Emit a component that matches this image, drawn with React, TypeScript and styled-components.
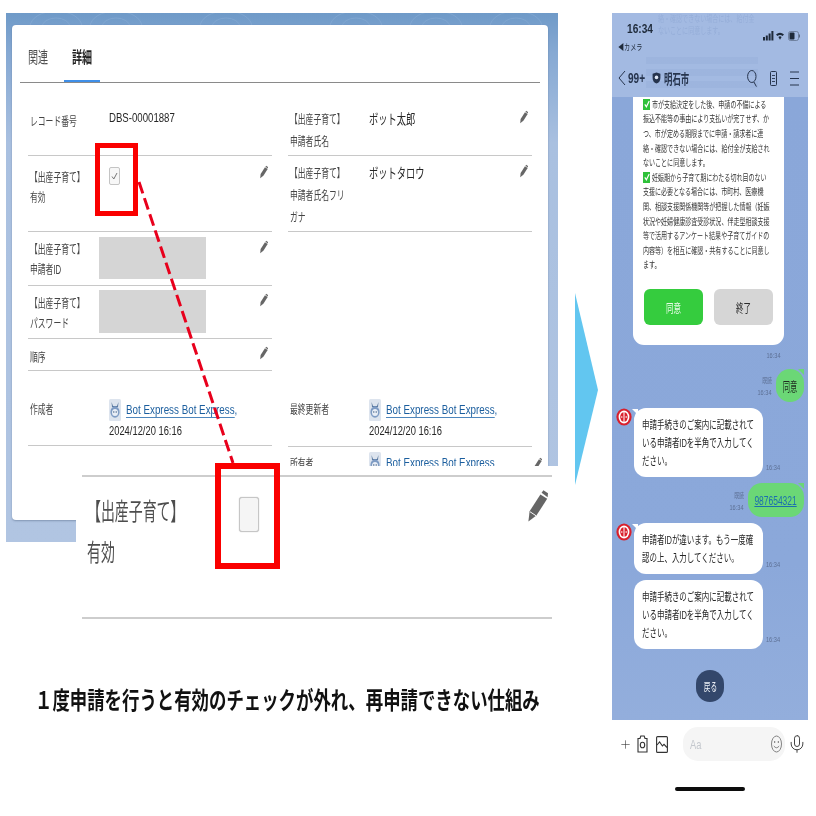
import styled, { createGlobalStyle } from "styled-components";
import { Mic, Plus } from "lucide-react";

const GlobalStyle = createGlobalStyle`
body {
    margin: 0;
    background: #fff;
    font-family: "Liberation Sans", "Noto Sans CJK JP", sans-serif;
    color: #2b2b2b;
}
`

const Page = styled.div`
position: relative;
width: 816px;
height: 816px;
display: flex;
overflow: hidden;
background: #fff;
`

const LeftCol = styled.div`
width: 552px;
margin-left: 6px;
padding-top: 13px;
flex-shrink: 0;
`

// text in the picture is squeezed horizontally, it comes from a stretched screenshot
const T = styled.span<{ $sx?: number; $origin?: string; $size?: number }>`
display: inline-block;
white-space: nowrap;
font-size: ${p => (p.$size ? `${p.$size}px` : "inherit")};
transform: scaleX(${p => p.$sx ?? 0.65});
transform-origin: ${p => p.$origin ?? "left"} center;
`

const Panel = styled.div`
position: relative;
height: 529px;
overflow: hidden;
background: linear-gradient(180deg, #6f9ac8 0, #86a9d3 40px, #a9c0e0 130px, #b1c5e2 100%);
filter: blur(0.3px);
`

const Swirls = styled.svg`
position: absolute;
left: 0;
top: 0;
opacity: 0.45;
`

const Card = styled.div`
position: relative;
margin: 12px 10px 22px 6px;
height: 495px;
background: #fff;
border-radius: 4px;
box-shadow: 0 1px 2px rgba(60, 80, 110, 0.4);
overflow: hidden;
`

const TabBar = styled.div`
display: flex;
gap: 24px;
height: 57px;
margin: 0 8px;
padding-left: 8px;
align-items: flex-end;
border-bottom: 1px solid #8a8a8a;
`

const Tab = styled.div<{ $active?: boolean }>`
position: relative;
width: 20px;
height: 34px;
font-size: 16px;
line-height: 20px;
font-weight: ${p => (p.$active ? 700 : 400)};
color: ${p => (p.$active ? "#1f1f1f" : "#4c4c4c")};
&::after {
    content: "";
    display: ${p => (p.$active ? "block" : "none")};
    position: absolute;
    left: -8px;
    width: 36px;
    bottom: 0;
    height: 2px;
    background: #3f8fe8;
}
`

const Columns = styled.div`
display: grid;
grid-template-columns: 244px 244px;
gap: 16px;
margin: 17px 0 0 16px;
`

const Column = styled.div`
display: flex;
flex-direction: column;
`

const Row = styled.div<{ $h: number; $noLine?: boolean }>`
display: grid;
grid-template-columns: 81px 1fr 16px;
height: ${p => p.$h}px;
border-bottom: ${p => (p.$noLine ? "none" : "1px solid #c8c8c8")};
box-sizing: border-box;
`

const Spacer = styled.div<{ $h: number }>`
height: ${p => p.$h}px;
`

const Label = styled.div<{ $top: number; $lh?: number }>`
padding: ${p => p.$top}px 0 0 2px;
font-size: 12px;
line-height: ${p => p.$lh ?? 20}px;
color: #444;
`

const Line = styled.div`
display: block;
`

const Value = styled.div<{ $top: number }>`
padding-top: ${p => p.$top}px;
font-size: 13px;
line-height: 20px;
color: #262626;
`

const Masked = styled.div<{ $top: number; $h: number }>`
margin: ${p => p.$top}px 0 0 -10px;
width: 107px;
height: ${p => p.$h}px;
background: #d5d5d5;
`

const SmallCheck = styled.div`
margin: 11px 0 0 0;
width: 11px;
height: 18px;
border: 1px solid #c4c4c4;
border-radius: 2px;
box-sizing: border-box;
background: #f7f7f7;
display: flex;
align-items: center;
justify-content: center;
color: #777;
`

const UserLine = styled.div<{ $top: number }>`
display: flex;
align-items: center;
gap: 5px;
height: 22px;
margin-top: ${p => p.$top}px;
`

const UserLink = styled.span`
display: inline-block;
white-space: nowrap;
transform: scaleX(0.755);
transform-origin: left center;
color: #1b5e9e;
line-height: 14px;
`

const UserName = styled.span`
border-bottom: 1px solid #4d86bd;
`

const PencilSlot = styled.div<{ $top: number }>`
padding-top: ${p => p.$top}px;
display: flex;
justify-content: center;
`

const PencilIcon = ({ large }: { large?: boolean }) => (
    <svg width={large ? 20 : 8} height={large ? 32 : 16} viewBox="0 0 10 16">
        <polygon points="0.2,15.8 0.8,10.6 6.2,2.2 9.6,4.4 4.2,12.8" fill="#666" />
        <polygon points="6.8,1.4 7.7,0.1 10,1.6 9.8,3.6" fill="#666" />
        {large && <line x1="0.9" y1="10.8" x2="4.2" y2="13" stroke="#fff" strokeWidth="0.5" />}
    </svg>
)

const BotAvatar = () => (
    <svg width="12" height="22" viewBox="0 0 12 22">
        <rect x="0" y="0" width="12" height="22" rx="1.5" fill="#dde4ee" />
        <path d="M2.5 3 L4 7 H8 L9.5 3 L9 8 H3z" fill="#59789f" />
        <ellipse cx="6" cy="13" rx="4.6" ry="5.8" fill="#7f9cc4" />
        <ellipse cx="6" cy="13.5" rx="3" ry="3.6" fill="#e9eef6" />
        <circle cx="4.8" cy="13" r="0.7" fill="#3d5a80" />
        <circle cx="7.2" cy="13" r="0.7" fill="#3d5a80" />
    </svg>
)

const CreatedBy = () => (
    <Value $top={0}>
        <UserLine $top={28}>
            <BotAvatar />
            <UserLink><UserName>Bot Express Bot Express</UserName>,</UserLink>
        </UserLine>
        <T $sx={0.72}>2024/12/20 16:16</T>
    </Value>
)

const SmallFrame = styled.div`
position: absolute;
left: 95px;
top: 143px;
width: 43px;
height: 73px;
box-sizing: border-box;
border: 5px solid #fa0000;
`

const Dashes = styled.svg`
position: absolute;
left: 130px;
top: 175px;
`

const ZoomPanel = styled.div`
position: absolute;
left: 76px;
top: 466px;
width: 499px;
height: 162px;
background: #fff;
filter: blur(0.4px);
`

const ZoomRow = styled.div`
margin: 9px 23px 0 6px;
height: 144px;
box-sizing: border-box;
border-top: 2px solid #cdcdcd;
border-bottom: 2px solid #cdcdcd;
display: grid;
grid-template-columns: 157px 1fr 24px;
`

const ZoomLabel = styled.div`
padding: 14px 0 0 5px;
font-size: 24px;
line-height: 41px;
color: #4d4d4d;
`

const BigCheck = styled.div`
margin-top: 20px;
width: 20px;
height: 35px;
box-sizing: border-box;
border: 1px solid #c6c6c6;
border-radius: 3px;
background: #f5f5f5;
box-shadow: 0 0 1px #aaa;
`

const ZoomPencil = styled.div`
padding-top: 13px;
`

const BigFrame = styled.div`
position: absolute;
left: 215px;
top: 463px;
width: 65px;
height: 106px;
box-sizing: border-box;
border: 6px solid #fa0000;
`

const Caption = styled.div`
margin-top: 144px;
padding-left: 29px;
height: 30px;
font-size: 24px;
line-height: 30px;
font-weight: 700;
color: #111;
`

const ArrowCol = styled.svg`
margin: 293px 0 0 17px;
flex-shrink: 0;
`

const Phone = styled.div`
margin: 13px 0 0 14px;
width: 196px;
flex-shrink: 0;
display: flex;
flex-direction: column;
filter: blur(0.25px);
`

const PhoneHeader = styled.div`
position: relative;
height: 84px;
background: #a3bae2;
overflow: hidden;
`

const GhostText = styled.div`
position: absolute;
left: 46px;
top: 0;
font-size: 9px;
line-height: 12px;
color: #4f6ea8;
opacity: 0.16;
`

const GhostBars = styled.div`
position: absolute;
left: 34px;
top: 44px;
width: 112px;
height: 32px;
opacity: 0.07;
background: repeating-linear-gradient(180deg, #4f6ea8 0, #4f6ea8 7px, transparent 7px, transparent 12px);
`

const Clock = styled.div`
position: absolute;
left: 15px;
top: 9px;
font-size: 13px;
line-height: 14px;
font-weight: 700;
color: #1e2a3a;
`

const BackApp = styled.div`
position: absolute;
left: 6px;
top: 29px;
font-size: 8.5px;
line-height: 10px;
color: #1e2a3a;
`

const StatusIcons = styled.svg`
position: absolute;
left: 150px;
top: 17px;
`

const NavBar = styled.div`
position: absolute;
left: 6px;
right: 9px;
top: 54px;
height: 22px;
display: flex;
align-items: center;
color: #26344d;
`

const NavTitle = styled.div<{ $w?: number; $left: number }>`
font-size: 14px;
font-weight: 700;
display: flex;
align-items: center;
margin-left: ${p => p.$left}px;
width: ${p => (p.$w ? `${p.$w}px` : "auto")};
`

const NavIcons = styled.div`
margin-left: auto;
display: flex;
align-items: center;
gap: 13px;
`

const Chat = styled.div`
height: 623px;
overflow: hidden;
background: linear-gradient(180deg, #8aa7d9 0, #8ba8da 75%, #93aedc 100%);
`

const FlexCard = styled.div`
margin-left: 21px;
width: 151px;
height: 248px;
box-sizing: border-box;
background: #fff;
border-radius: 0 0 11px 11px;
padding-left: 10px;
`

const CardLine = styled.div`
display: flex;
align-items: center;
height: 14.6px;
font-size: 9px;
color: #333;
`

const GreenTick = styled.span`
display: inline-flex;
align-items: center;
justify-content: center;
width: 7px;
height: 11px;
margin-right: 1.5px;
background: #2fc13a;
color: #fff;
flex-shrink: 0;
`

const Buttons = styled.div`
display: flex;
gap: 11px;
margin-top: 17px;
margin-left: 1px;
`

const FlexButton = styled.div<{ $green?: boolean }>`
width: 59px;
height: 36px;
border-radius: 6px;
display: flex;
align-items: center;
justify-content: center;
font-size: 12.5px;
background: ${p => (p.$green ? "#35cc3e" : "#d6d6d6")};
color: ${p => (p.$green ? "#e9fbe9" : "#2b2b2b")};
`

const TimeRow = styled.div`
display: flex;
justify-content: flex-end;
height: 8px;
margin-top: 7px;
padding-right: 27px;
`

const Stamp = styled.div`
font-size: 7px;
line-height: 8px;
color: #5d7095;
text-align: right;
`

const SentRow = styled.div<{ $top: number }>`
display: flex;
justify-content: flex-end;
align-items: flex-end;
gap: 4px;
margin-top: ${p => p.$top}px;
padding-right: 4px;
`

const SentMeta = styled.div`
display: flex;
flex-direction: column;
gap: 4px;
padding-bottom: 5px;
`

const SentBubble = styled.div<{ $w: number; $h: number }>`
position: relative;
width: ${p => p.$w}px;
height: ${p => p.$h}px;
border-radius: 14px;
background: #6bd776;
display: flex;
align-items: center;
justify-content: center;
font-size: 13px;
color: #1f2d20;
&::after {
    content: "";
    position: absolute;
    right: 0;
    top: 0;
    width: 0;
    height: 0;
    border-top: 6px solid #6bd776;
    border-left: 6px solid transparent;
}
`

const PhoneLink = styled.span`
display: inline-block;
white-space: nowrap;
font-size: 13px;
color: #1c6fae;
text-decoration: underline;
transform: scaleX(0.65);
`

const RecvRow = styled.div<{ $top: number }>`
display: flex;
align-items: flex-end;
gap: 3px;
margin-top: ${p => p.$top}px;
padding-left: 22px;
position: relative;
`

const OrgAvatar = styled.svg`
position: absolute;
left: 4px;
top: 0;
`

const Bubble = styled.div<{ $lh: number; $tail?: boolean }>`
position: relative;
width: 129px;
box-sizing: border-box;
padding: 8px 0 7px 8px;
border-radius: 12px;
background: #fff;
font-size: 11.5px;
line-height: ${p => p.$lh}px;
color: #262626;
&::before {
    content: "";
    display: ${p => (p.$tail ? "block" : "none")};
    position: absolute;
    left: -2px;
    top: 1px;
    width: 0;
    height: 0;
    border-top: 6px solid #fff;
    border-left: 6px solid transparent;
}
`

const RecvStamp = styled(Stamp)`
padding-bottom: 5px;
`

const BackRow = styled.div`
display: flex;
justify-content: center;
margin-top: 21px;
`

const BackButton = styled.div`
width: 28px;
height: 32px;
border-radius: 14px;
background: #33476b;
color: #eef2f8;
font-size: 11.5px;
display: flex;
align-items: center;
justify-content: center;
`

const InputBar = styled.div`
height: 50px;
padding: 7px 0 0 7px;
box-sizing: border-box;
display: flex;
align-items: flex-start;
background: #fff;
color: #333;
`

const BarIcon = styled.div<{ $w: number }>`
width: ${p => p.$w}px;
height: 34px;
display: flex;
align-items: center;
justify-content: center;
flex-shrink: 0;
`

const InputBox = styled.div`
width: 102px;
height: 34px;
box-sizing: border-box;
padding: 0 3px 0 7px;
border-radius: 15px;
background: #f5f5f5;
display: flex;
align-items: center;
justify-content: space-between;
font-size: 13px;
color: #c4c8ce;
flex-shrink: 0;
`

const HomeBar = styled.div`
margin: 17px 0 0 63px;
width: 70px;
height: 4px;
border-radius: 2px;
background: #0c0c0c;
`

const CardText = [
    [true, "市が支給決定をした後、申請の不備による"],
    [false, "振込不能等の事由により支払いが完了せず、か"],
    [false, "つ、市が定める期限までに申請・請求者に連"],
    [false, "絡・確認できない場合には、給付金が支給され"],
    [false, "ないことに同意します。"],
    [true, "妊娠期から子育て期にわたる切れ目のない"],
    [false, "支援に必要となる場合には、市町村、医療機"],
    [false, "関、相談支援関係機関等が把握した情報（妊娠"],
    [false, "状況や妊婦健康診査受診状況、伴走型相談支援"],
    [false, "等で活用するアンケート結果や子育てガイドの"],
    [false, "内容等）を相互に確認・共有することに同意し"],
    [false, "ます。"],
] as const

const Avatar = () => (
    <OrgAvatar width="16" height="18" viewBox="0 0 16 18">
        <ellipse cx="8" cy="9" rx="7.6" ry="8.6" fill="#d9202c" />
        <ellipse cx="8" cy="9" rx="5.4" ry="6.4" fill="#fff" />
        <ellipse cx="8" cy="9" rx="3.8" ry="4.8" fill="#d9202c" />
        <line x1="8" y1="3.5" x2="8" y2="14.5" stroke="#fff" strokeWidth="1" />
        <circle cx="5.8" cy="9" r="0.8" fill="#fff" />
        <circle cx="10.2" cy="9" r="0.8" fill="#fff" />
    </OrgAvatar>
)

const Tick = () => (
    <GreenTick>
        <svg width="6" height="8" viewBox="0 0 6 8">
            <path d="M0.8 4.4 L2.4 6.8 L5.2 1" fill="none" stroke="#fff" strokeWidth="1.2" />
        </svg>
    </GreenTick>
)

const BracketLabel = "【出産子育て】"

const App = () => {
    return (
        <Page>
            <GlobalStyle />
            <LeftCol>
                <Panel>
                    <Swirls width="552" height="60" viewBox="0 0 552 60">
                        {[50, 110, 220, 350, 430, 510].map(x => (
                            <g key={x} fill="none" stroke="#8fb1d8" strokeWidth="1">
                                <ellipse cx={x} cy="14" rx="26" ry="16" />
                                <ellipse cx={x} cy="14" rx="14" ry="9" />
                            </g>
                        ))}
                    </Swirls>
                    <Card>
                        <TabBar>
                            <Tab><T $sx={0.63}>関連</T></Tab>
                            <Tab $active><T $sx={0.63}>詳細</T></Tab>
                        </TabBar>
                        <Columns>
                            <Column>
                                <Row $h={56}>
                                    <Label $top={12}><T>レコード番号</T></Label>
                                    <Value $top={8}><T $sx={0.74}>DBS-00001887</T></Value>
                                </Row>
                                <Row $h={76}>
                                    <Label $top={12}>
                                        <Line><T>{BracketLabel}</T></Line>
                                        <Line><T>有効</T></Line>
                                    </Label>
                                    <SmallCheck>
                                        <svg width="7" height="8" viewBox="0 0 7 8">
                                            <path d="M1 4.5 L2.8 7 L6 1" fill="none" stroke="#777" strokeWidth="1" />
                                        </svg>
                                    </SmallCheck>
                                    <PencilSlot $top={8}><PencilIcon /></PencilSlot>
                                </Row>
                                <Row $h={54}>
                                    <Label $top={8}>
                                        <Line><T>{BracketLabel}</T></Line>
                                        <Line><T>申請者ID</T></Line>
                                    </Label>
                                    <Masked $top={5} $h={42} />
                                    <PencilSlot $top={7}><PencilIcon /></PencilSlot>
                                </Row>
                                <Row $h={53}>
                                    <Label $top={8}>
                                        <Line><T>{BracketLabel}</T></Line>
                                        <Line><T>パスワード</T></Line>
                                    </Label>
                                    <Masked $top={4} $h={43} />
                                    <PencilSlot $top={6}><PencilIcon /></PencilSlot>
                                </Row>
                                <Row $h={32}>
                                    <Label $top={9}><T>順序</T></Label>
                                    <div />
                                    <PencilSlot $top={6}><PencilIcon /></PencilSlot>
                                </Row>
                                <Row $h={75}>
                                    <Label $top={29}><T>作成者</T></Label>
                                    <CreatedBy />
                                </Row>
                            </Column>
                            <Column>
                                <Row $h={56}>
                                    <Label $top={9} $lh={22}>
                                        <Line><T>{BracketLabel}</T></Line>
                                        <Line><T>申請者氏名</T></Line>
                                    </Label>
                                    <Value $top={9}><T $size={14} $sx={0.66}>ボット太郎</T></Value>
                                    <PencilSlot $top={9}><PencilIcon /></PencilSlot>
                                </Row>
                                <Row $h={76}>
                                    <Label $top={7} $lh={22}>
                                        <Line><T>{BracketLabel}</T></Line>
                                        <Line><T>申請者氏名フリ</T></Line>
                                        <Line><T>ガナ</T></Line>
                                    </Label>
                                    <Value $top={7}><T $size={14} $sx={0.66}>ボットタロウ</T></Value>
                                    <PencilSlot $top={7}><PencilIcon /></PencilSlot>
                                </Row>
                                <Spacer $h={139} />
                                <Row $h={76}>
                                    <Label $top={29}><T>最終更新者</T></Label>
                                    <CreatedBy />
                                </Row>
                                <Row $h={60} $noLine>
                                    <Label $top={7}><T>所有者</T></Label>
                                    <Value $top={0}>
                                        <UserLine $top={5}>
                                            <BotAvatar />
                                            <UserLink>Bot Express Bot Express</UserLink>
                                        </UserLine>
                                    </Value>
                                    <PencilSlot $top={9}><PencilIcon /></PencilSlot>
                                </Row>
                            </Column>
                        </Columns>
                    </Card>
                </Panel>
                <Caption><T $sx={0.725}>１度申請を行うと有効のチェックが外れ、再申請できない仕組み</T></Caption>
            </LeftCol>

            <ArrowCol width="23" height="192" viewBox="0 0 23 192">
                <polygon points="0,0 23,97 0,192" fill="#62c6f0" />
            </ArrowCol>

            <Phone>
                <PhoneHeader>
                    <GhostText>
                        <div><T $sx={0.67}>絡・確認できない場合には、給付金</T></div>
                        <div><T $sx={0.67}>ないことに同意します。</T></div>
                    </GhostText>
                    <GhostBars />
                    <Clock><T $sx={0.78}>16:34</T></Clock>
                    <BackApp><T $sx={0.72}>◀カメラ</T></BackApp>
                    <StatusIcons width="40" height="12" viewBox="0 0 40 12">
                        <rect x="1" y="7" width="2" height="3.5" fill="#1e2a3a" />
                        <rect x="3.8" y="5.5" width="2" height="5" fill="#1e2a3a" />
                        <rect x="6.6" y="3.5" width="2" height="7" fill="#1e2a3a" />
                        <rect x="9.4" y="1" width="2" height="9.5" fill="#1e2a3a" />
                        <path d="M14 4.6 Q18 1 22 4.6 L20.6 6 Q18 3.8 15.4 6z" fill="#1e2a3a" />
                        <path d="M16.4 7 Q18 5.6 19.6 7 L18 9.8z" fill="#1e2a3a" />
                        <rect x="26.5" y="1.5" width="10" height="9" rx="2" fill="none" stroke="#5a6a84" strokeWidth="0.7" />
                        <rect x="27.5" y="2.5" width="5" height="7" rx="1" fill="#1e2a3a" />
                        <rect x="37" y="4.5" width="1" height="3" fill="#5a6a84" />
                    </StatusIcons>
                    <NavBar>
                        <svg width="8" height="16" viewBox="0 0 8 16">
                            <path d="M7 1 L1 8 L7 15" fill="none" stroke="#26344d" strokeWidth="1" />
                        </svg>
                        <NavTitle $w={24} $left={2}><T $sx={0.72}>99+</T></NavTitle>
                        <svg width="9" height="12" viewBox="0 0 9 12">
                            <path d="M4.5 0.4 L8.4 1.8 V6 Q8.4 10 4.5 11.6 Q0.6 10 0.6 6 V1.8z" fill="#26344d" />
                            <circle cx="4.5" cy="5.4" r="1.8" fill="#dfe7f4" />
                        </svg>
                        <NavTitle $left={3}><T $sx={0.6}>明石市</T></NavTitle>
                        <NavIcons>
                            <svg width="10" height="17" viewBox="0 0 10 17">
                                <ellipse cx="4.8" cy="6.5" rx="4.2" ry="6" fill="none" stroke="#26344d" strokeWidth="1" />
                                <path d="M6.8 11.8 L9.4 16.6" stroke="#26344d" strokeWidth="1" />
                            </svg>
                            <svg width="7" height="15" viewBox="0 0 7 15">
                                <rect x="0.5" y="0.5" width="6" height="14" rx="1" fill="none" stroke="#26344d" strokeWidth="1" />
                                <path d="M2 4.5 H5 M2 7.5 H5 M2 10.5 H5" stroke="#26344d" strokeWidth="0.9" />
                            </svg>
                            <svg width="9" height="15" viewBox="0 0 9 15">
                                <path d="M0 1 H9 M0 7.5 H9 M0 14 H9" stroke="#26344d" strokeWidth="1" />
                            </svg>
                        </NavIcons>
                    </NavBar>
                </PhoneHeader>

                <Chat>
                    <FlexCard>
                        {CardText.map(([tick, text]) => (
                            <CardLine key={text}>
                                {tick && <Tick />}
                                <T $sx={0.67}>{text}</T>
                            </CardLine>
                        ))}
                        <Buttons>
                            <FlexButton $green><T $sx={0.6} $origin="center">同意</T></FlexButton>
                            <FlexButton><T $sx={0.6} $origin="center">終了</T></FlexButton>
                        </Buttons>
                    </FlexCard>
                    <TimeRow><Stamp><T $sx={0.8} $origin="right">16:34</T></Stamp></TimeRow>
                    <SentRow $top={9}>
                        <SentMeta>
                            <Stamp><T $sx={0.7} $origin="right">既読</T></Stamp>
                            <Stamp><T $sx={0.8} $origin="right">16:34</T></Stamp>
                        </SentMeta>
                        <SentBubble $w={28} $h={33}><T $sx={0.56} $origin="center">同意</T></SentBubble>
                    </SentRow>
                    <RecvRow $top={6}>
                        <Avatar />
                        <Bubble $lh={18} $tail>
                            <Line><T>申請手続きのご案内に記載されて</T></Line>
                            <Line><T>いる申請者IDを半角で入力してく</T></Line>
                            <Line><T>ださい。</T></Line>
                        </Bubble>
                        <RecvStamp><T $sx={0.8}>16:34</T></RecvStamp>
                    </RecvRow>
                    <SentRow $top={6}>
                        <SentMeta>
                            <Stamp><T $sx={0.7} $origin="right">既読</T></Stamp>
                            <Stamp><T $sx={0.8} $origin="right">16:34</T></Stamp>
                        </SentMeta>
                        <SentBubble $w={56} $h={34}><PhoneLink>987654321</PhoneLink></SentBubble>
                    </SentRow>
                    <RecvRow $top={6}>
                        <Avatar />
                        <Bubble $lh={18} $tail>
                            <Line><T>申請者IDが違います。もう一度確</T></Line>
                            <Line><T>認の上、入力してください。</T></Line>
                        </Bubble>
                        <RecvStamp><T $sx={0.8}>16:34</T></RecvStamp>
                    </RecvRow>
                    <RecvRow $top={6}>
                        <Bubble $lh={18}>
                            <Line><T>申請手続きのご案内に記載されて</T></Line>
                            <Line><T>いる申請者IDを半角で入力してく</T></Line>
                            <Line><T>ださい。</T></Line>
                        </Bubble>
                        <RecvStamp><T $sx={0.8}>16:34</T></RecvStamp>
                    </RecvRow>
                    <BackRow>
                        <BackButton><T $sx={0.58} $origin="center">戻る</T></BackButton>
                    </BackRow>
                </Chat>

                <InputBar>
                    <BarIcon $w={13}><Plus size={21} strokeWidth={1.1} /></BarIcon>
                    <BarIcon $w={20}>
                        <svg width="11" height="18" viewBox="0 0 11 18">
                            <path d="M1 3.5 H3 L3.8 1 H7.2 L8 3.5 H10 V17 H1z" fill="none" stroke="#333" strokeWidth="1.1" />
                            <ellipse cx="5.5" cy="10" rx="2.2" ry="2.8" fill="none" stroke="#333" strokeWidth="1.1" />
                        </svg>
                    </BarIcon>
                    <BarIcon $w={20}>
                        <svg width="12" height="17" viewBox="0 0 12 17">
                            <rect x="0.6" y="0.6" width="10.8" height="15.8" rx="1" fill="none" stroke="#333" strokeWidth="1.1" />
                            <path d="M1 9 L3.6 6 L6.4 10 L8 8.4 L11 11.5" fill="none" stroke="#333" strokeWidth="1.1" />
                        </svg>
                    </BarIcon>
                    <BarIcon $w={11} />
                    <InputBox>
                        <T $sx={0.72}>Aa</T>
                        <svg width="11" height="18" viewBox="0 0 11 18">
                            <ellipse cx="5.5" cy="9" rx="5" ry="8" fill="none" stroke="#666" strokeWidth="0.8" />
                            <ellipse cx="3.7" cy="7" rx="0.6" ry="0.9" fill="#666" />
                            <ellipse cx="7.3" cy="7" rx="0.6" ry="0.9" fill="#666" />
                            <path d="M2.8 11 Q5.5 14.5 8.2 11" fill="none" stroke="#666" strokeWidth="0.8" />
                        </svg>
                    </InputBox>
                    <BarIcon $w={24}><Mic size={20} strokeWidth={1.1} /></BarIcon>
                </InputBar>
                <HomeBar />
            </Phone>

            <SmallFrame />
            <Dashes width="110" height="295" viewBox="0 0 110 295">
                <line x1="9" y1="7" x2="103" y2="288" stroke="#e8001c" strokeWidth="3" strokeDasharray="12 5" />
            </Dashes>
            <ZoomPanel>
                <ZoomRow>
                    <ZoomLabel>
                        <Line><T $sx={0.58}>{BracketLabel}</T></Line>
                        <Line><T $sx={0.58}>有効</T></Line>
                    </ZoomLabel>
                    <BigCheck />
                    <ZoomPencil><PencilIcon large /></ZoomPencil>
                </ZoomRow>
            </ZoomPanel>
            <BigFrame />
        </Page>
    );
}

export default App;
